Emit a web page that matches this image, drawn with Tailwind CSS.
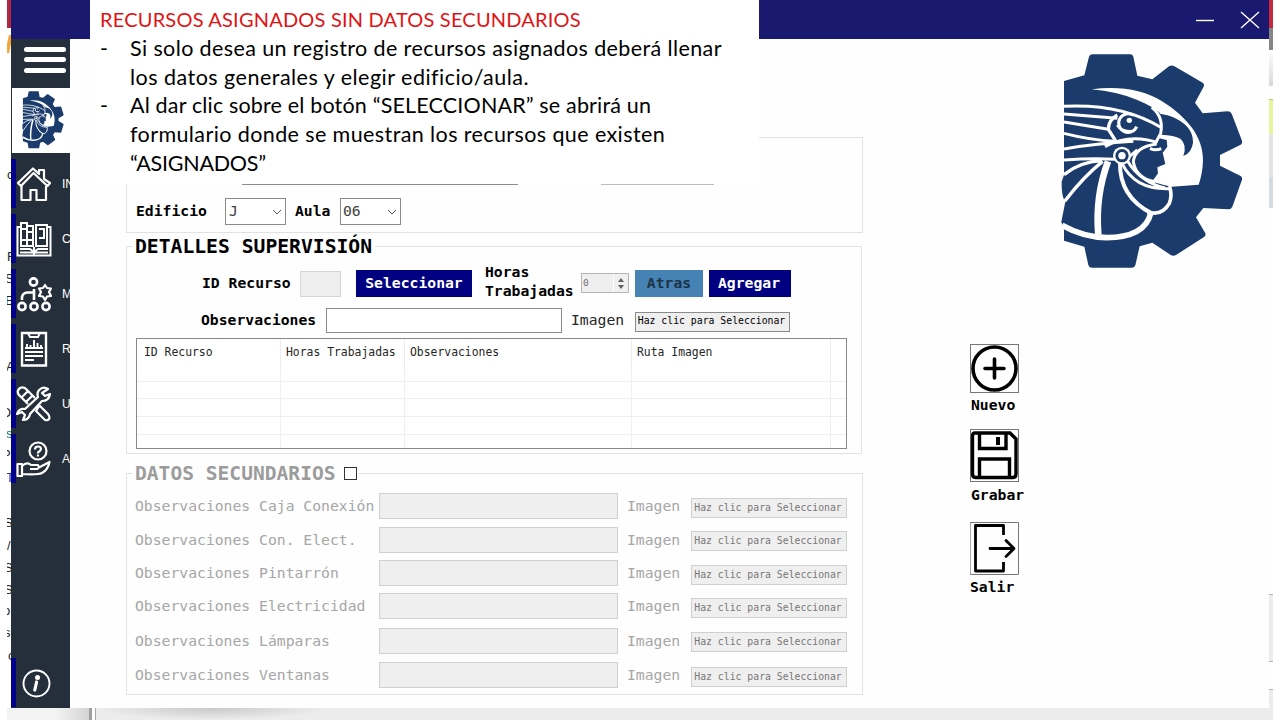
<!DOCTYPE html>
<html lang="es">
<head>
<meta charset="utf-8">
<title>Supervisión de recursos</title>
<script src="https://cdn.jsdelivr.net/npm/@tailwindcss/browser@4"></script>
</head>
<body class="bg-white">
<svg class="hidden">
  <symbol id="logo" viewBox="60 150 552 660" preserveAspectRatio="none">
    <path fill="#1b3b6c" d="M72,243L133,226L147,170Q150,163 158,163H270Q278,163 280,170L292,227L337,238L387,199Q394,194 402,198L488,248Q494,252 491,260L465,308L488,340L563,334Q571,334 575,341L606,422Q608,430 602,434L540,465V497L602,528Q608,532 606,539L577,620Q573,628 565,628L490,624L468,652L496,700Q498,707 492,711L408,765Q400,770 392,765L337,728L299,739L286,796Q284,803 276,803H155Q147,803 145,795L133,740L72,722V690L64,665L76,605Q64,590 65,545L72,525Z"/>
    <path fill="#fff" d="M155,268Q280,252 365,303C440,350 490,410 489,480Q488,520 476,554L395,560L372,555L336,545L354,520L352,502L376,492L368,458L382,440L380,420L358,415L368,385L360,340Q350,325 290,299Q230,275 155,268Z"/>
    <path fill="#1b3b6c" d="M360,341C420,350 462,385 459,428Q455,458 430,468Q442,436 422,417Q402,405 364,404Z"/>
    <g fill="none" stroke="#fff" stroke-width="9">
      <path d="M72,319C170,314 270,326 362,382M335,322Q372,350 362,400L345,432"/>
      <path d="M72,342L232,355M72,366L205,388M72,400Q150,420 225,424M72,447Q170,430 280,424M195,440Q270,400 352,428M72,480Q160,474 225,478" />
      <path d="M232,345Q205,360 205,388L228,424" stroke-width="10"/>
      <path d="M280,346A28,28 0 1 0 290,380M232,375Q245,397 275,394"/>
      <path d="M72,524Q120,485 185,482M188,484Q130,530 74,604" stroke-width="10"/>
      <path d="M204,484Q165,590 175,704" stroke-width="20"/>
      <path d="M240,488Q238,590 335,640" stroke-width="12"/>
      <path d="M262,482Q300,545 375,564M246,490Q285,570 388,566"/>
      <path d="M66,676Q130,712 200,713C270,712 320,690 332,640" stroke-width="17"/>
      <path d="M322,636Q365,650 388,610Q398,585 388,558" stroke-width="11"/>
      <path d="M350,432Q285,440 280,485Q288,535 345,545M268,470L292,450"/>
      <path d="M330,445Q345,453 364,446"/>
    </g>
    <circle cx="246" cy="467" r="27" fill="#fff"/><circle cx="246" cy="467" r="20" fill="#1b3b6c"/><circle cx="246" cy="467" r="11" fill="#fff"/>
    <circle cx="268" cy="361" r="8" fill="#fff"/>
  </symbol>
</svg>

<div class="relative w-[1280px] h-[720px] overflow-hidden bg-white font-['DejaVu_Sans_Mono',monospace] text-black">

  <!-- edges of the windows that lie behind -->
  <div class="absolute left-[7px] top-0 w-[4px] h-[708px] bg-white overflow-hidden font-['Liberation_Sans',sans-serif] text-[13px] leading-none text-neutral-800">
    <div class="h-[28px] bg-[#b0263c]"></div>
    <div class="absolute top-[35px] h-[18px] w-[4px] bg-[#f0a63c] -skew-x-12"></div>
    <div class="absolute top-[168px] left-0">c</div>
    <div class="absolute top-[250px] left-0">F</div>
    <div class="absolute top-[272px] -left-[2px]">S</div>
    <div class="absolute top-[294px] -left-[2px]">E</div>
    <div class="absolute top-[360px] -left-[1px]">A</div>
    <div class="absolute top-[406px] -left-[6px]">O</div>
    <div class="absolute top-[427px] -left-[1px] text-teal-700">s</div>
    <div class="absolute top-[448px] -left-[5px]">P</div>
    <div class="absolute top-[471px] -left-[1px] text-blue-800">T</div>
    <div class="absolute top-[516px] -left-[3px]">S</div>
    <div class="absolute top-[539px] left-0">/</div>
    <div class="absolute top-[561px] -left-[3px]">S</div>
    <div class="absolute top-[583px] -left-[3px]">S</div>
    <div class="absolute top-[604px] -left-[4px]">o</div>
    <div class="absolute top-[626px] -left-[3px]">s</div>
    <div class="absolute top-[649px] left-[1px]">c</div>
  </div>
  <div class="absolute left-[7px] top-[708px] w-[1266px] h-[12px] bg-[#ececec] flex">
    <div class="w-[82px] bg-gradient-to-r from-[#f3f3f3] from-60% to-[#d4d4d4]"></div>
    <div class="w-[3px] bg-[#a0a0a0]"></div>
    <div class="w-[3px] bg-white"></div>
    <div class="w-px bg-[#a8a8a8]"></div>
    <div class="w-[230px] bg-[radial-gradient(ellipse_at_top,#c8c8c8_0%,#ececec_70%)]"></div>
  </div>
  <div class="absolute left-[1269px] top-0 w-[4px] h-[708px] flex flex-col">
    <div class="h-[28px] bg-[#c8283c]"></div>
    <div class="h-[22px] bg-[#858585]"></div>
    <div class="h-[36px] bg-gradient-to-b from-white to-[#d8d8d8]"></div>
    <div class="h-[13px]"></div>
    <div class="h-[35px] bg-[#e6f49c] border-t border-[#b8c878]"></div>
    <div class="h-[43px] bg-[#e4e4e6]"></div>
    <div class="h-[31px] bg-[#d5dbe5]"></div>
    <div class="h-[386px]"></div>
    <div class="h-[68px] bg-[#ececec] border-y border-[#b4b4b4]"></div>
    <div class="h-[27px]"></div>
    <div class="h-[19px] bg-[#ececec] border-t border-[#b4b4b4]"></div>
  </div>

  <!-- application window -->
  <div class="ml-[11px] w-[1258px] h-[708px] flex flex-col bg-[#fefefe]">
    <header class="relative h-[39px] shrink-0 bg-[#191970] flex items-center justify-end gap-[26px] pr-[9px]">
      <svg width="18" height="18" stroke="#fff" stroke-width="1.4"><path d="M0,9.5H18"/></svg>
      <svg width="20" height="18" stroke="#fff" stroke-width="1.4"><path d="M1,1L19,17M19,1L1,17"/></svg>
    </header>
    <div class="flex flex-1">
      <nav class="w-[59px] h-[669px] bg-[#252f3b] flex flex-col overflow-hidden text-white font-['Liberation_Sans',sans-serif] text-[12px]">
        <div class="h-[49px] pl-[13px] pt-[8px] flex flex-col gap-[5.4px]">
          <div class="w-[42px] h-[5px] rounded-sm bg-white"></div>
          <div class="w-[42px] h-[5px] rounded-sm bg-white"></div>
          <div class="w-[42px] h-[5px] rounded-sm bg-white"></div>
        </div>
        <div class="ml-px h-[65px] bg-white pl-[10px] pt-[2px]"><svg class="w-[42px] h-[59px]"><use href="#logo"/></svg></div>
        <div class="mt-[6px] flex flex-col gap-[6px] whitespace-nowrap">
          <div class="h-[49px] border-l-[5px] border-[#00008b] flex items-center"><svg class="w-[36px] h-[36px] shrink-0 mr-[10px]" viewBox="0 0 36 36" fill="none" stroke="#fff" stroke-width="2.2" stroke-linejoin="round"><path d="M2,17L17,2.500L23,8V4H28V13L34,17L31.500,20L17.500,7L5,20Z"/><path d="M5.500,20V34H14.500V24H20.500V34H30V20"/></svg>IN</div>
          <div class="h-[49px] border-l-[5px] border-[#00008b] flex items-center"><svg class="w-[36px] h-[36px] shrink-0 mr-[10px]" viewBox="0 0 36 36" fill="none" stroke="#fff" stroke-width="2"><path d="M4,6H1.500V34.500H34.500V6H32M4,28H14L18,31L22,28H32M4,31.500H32M18,26V34"/><path d="M5,2H11V25H5ZM11,5H17V25H11ZM20,4H31V25H20ZM23,8H28V17H23M5,8H11M5,19H11M11,11H17M11,19H17"/></svg>C</div>
          <div class="h-[49px] border-l-[5px] border-[#00008b] flex items-center"><svg class="w-[36px] h-[36px] shrink-0 mr-[10px]" viewBox="0 0 36 36" fill="none" stroke="#fff" stroke-width="2.6"><circle cx="17.500" cy="6" r="3.600"/><circle cx="6" cy="30.500" r="3.600"/><circle cx="18" cy="30.500" r="3.600"/><circle cx="30" cy="30.500" r="3.600"/><path d="M6,24V21Q7,16.500 12,16.500H19M18,13V24"/><path stroke-width="2.200" stroke-linejoin="round" d="M29,9L31,12L35,12.500L33,16L35,20L31,20.500L29,24L27,20.500L23,20L25,16L23,12.500L27,12Z"/></svg>M</div>
          <div class="h-[49px] border-l-[5px] border-[#00008b] flex items-center"><svg class="w-[36px] h-[36px] shrink-0 mr-[10px]" viewBox="0 0 36 36" fill="none" stroke="#fff" stroke-width="1.900"><path stroke-width="2.400" d="M6,2H30V34.500H6Z"/><path d="M12,2L14,6H22L24,2M9,17H27M9,21H27M9,25H27M9,29H18M11,17V13M14.500,17V14M18,17V9M21.500,17V12M25,17V14"/></svg>R</div>
          <div class="h-[49px] border-l-[5px] border-[#00008b] flex items-center"><svg class="w-[36px] h-[36px] shrink-0 mr-[10px]" viewBox="0 0 36 36" fill="none" stroke="#fff" stroke-width="2.200" stroke-linejoin="round"><path d="M12,18L3,9Q0,5 4,2Q8,0 11,4L19,12M6,11L12,5M21,22L24,20L32,28Q35,32 32,34Q29,35 27,32L20,25L22,22M10,16L17,9"/><path d="M26,2Q20,5 22,11L9,23Q3,22 1,28L6,26L9,29L7,34Q13,34 14,28L26,15Q33,15 34,8L29,10L26,7L32,3Q29,1 26,2Z"/></svg>U</div>
          <div class="h-[49px] border-l-[5px] border-[#00008b] flex items-center"><svg class="w-[36px] h-[36px] shrink-0 mr-[10px]" viewBox="0 0 36 36" fill="none" stroke="#fff" stroke-width="2.200" stroke-linejoin="round"><circle cx="22" cy="10" r="8.500"/><path d="M19,8.500Q19,5.500 22,5.500Q25,5.500 25,8Q25,9.500 22,11.500V12.500M22,13.500V15.500"/><path d="M1.500,23H6V35H1.500ZM6,25Q11,20.500 15,24H22Q24,27 21,28H14M22,27L33.500,21Q32,29 26,32Q22,34 6,33"/></svg>A</div>
        </div>
        <div class="mt-auto mb-px h-[49px] border-l-[5px] border-[#00008b] pl-[6px] pt-[11px]"><svg class="w-[29px] h-[29px]" viewBox="0 0 29 29" fill="none" stroke="#fff"><circle cx="14.500" cy="14.500" r="13" stroke-width="1.900"/><path stroke-width="3.200" stroke-linecap="round" d="M14.600,13L12.800,21"/><circle cx="15.500" cy="8.500" r="2.500" fill="#fff" stroke="none"/></svg></div>
      </nav>

      <main class="flex flex-1">
        <form class="ml-[56px] mt-[97px] w-[737px] text-[14.73px]">
          <!-- general data -->
          <section class="mt-px h-[96px] border border-[#e2e2e2] flex flex-col">
            <div class="h-[47px] pl-[115px] flex gap-[83px]"><div class="w-[276px] border-b border-[#8a8a8a]"></div><div class="w-[113px] border-b border-[#bdbdbd]"></div></div>
            <div class="mt-[13px] ml-[9px] flex items-center h-[27px] font-bold">
              <span class="w-[89px]">Edificio</span>
              <div class="w-[61px] h-[27px] border border-[#8a8a8a] bg-white pl-[3px] pr-[3px] flex items-center justify-between font-normal text-neutral-700">J<svg width="10" height="6" fill="none" stroke="#555"><path d="M1,1L5,5L9,1"/></svg></div>
              <span class="ml-[9px] w-[45px]">Aula</span>
              <div class="w-[61px] h-[27px] border border-[#8a8a8a] bg-white pl-[2px] pr-[3px] flex items-center justify-between font-normal text-neutral-700">06<svg width="10" height="6" fill="none" stroke="#555"><path d="M1,1L5,5L9,1"/></svg></div>
            </div>
          </section>

          <!-- supervision details -->
          <section class="mt-[13px] w-[736px] h-[208px] border border-[#e2e2e2]">
            <h2 class="-mt-[12px] ml-[6px] pl-[2px] w-[242px] h-[24px] leading-[24px] bg-[#fefefe] font-bold text-[19.7px] whitespace-nowrap">DETALLES SUPERVISIÓN</h2>
            <div class="mt-[5px] h-[38px] flex items-center font-bold whitespace-nowrap">
              <span class="ml-[75px] w-[98px]">ID Recurso</span>
              <div class="w-[41px] h-[26px] mt-[2px] border border-[#d4d4d4] bg-[#efefef]"></div>
              <div class="ml-[15px] mt-px w-[116px] h-[27px] bg-[#000080] text-white flex items-center justify-center">Seleccionar</div>
              <div class="ml-[13px] w-[96px] leading-[18.500px] -mt-[3px]">Horas<br>Trabajadas</div>
              <div class="w-[48px] h-[20px] border border-[#b4b4b4] bg-[#efefef] pl-px flex justify-between font-normal text-[9.500px] text-neutral-500"><span class="leading-[17px]">0</span>
                <div class="w-[15px] flex flex-col items-center justify-center gap-[3px] border-l border-white"><svg width="6" height="4" fill="#606060"><path d="M0,4L3,0L6,4Z"/></svg><svg width="6" height="4" fill="#606060"><path d="M0,0L3,4L6,0Z"/></svg></div></div>
              <div class="ml-[6px] mt-px w-[68px] h-[27px] bg-[#4682b4] text-[#1c3448] flex items-center justify-center">Atras</div>
              <div class="ml-[6px] mt-px w-[82px] h-[27px] pr-[2px] bg-[#000080] text-white flex items-center justify-center">Agregar</div>
            </div>
            <div class="mt-[5px] h-[26px] flex items-center whitespace-nowrap">
              <span class="ml-[74px] w-[125px] font-bold">Observaciones</span>
              <div class="w-[236px] h-[25px] border border-[#8a8a8a] bg-white"></div>
              <span class="ml-[9px] w-[64px] text-neutral-800">Imagen</span>
              <div class="mt-[3px] w-[155px] h-[20px] pr-[2px] border border-[#8a8a8a] bg-[#efefef] flex items-center justify-center text-[9.8px]">Haz clic para Seleccionar</div>
            </div>
            <div class="mt-[5px] ml-[9px] w-[711px] h-[111px] border border-[#85888c] bg-white text-[11.400px] text-neutral-800">
              <div class="h-[25px] flex leading-[26px] whitespace-nowrap">
                <div class="w-[144px] pl-[7px] border-r border-[#ececec]">ID Recurso</div>
                <div class="w-[124px] pl-[5px] border-r border-[#ececec]">Horas Trabajadas</div>
                <div class="w-[227px] pl-[5px] border-r border-[#ececec]">Observaciones</div>
                <div class="w-[199px] pl-[5px] border-r border-[#ececec]">Ruta Imagen</div>
              </div>
              <div class="h-[84px] flex bg-[repeating-linear-gradient(to_bottom,transparent_0_16.700px,#efefef_16.700px_17.700px)]">
                <div class="w-[144px] border-r border-[#efefef]"></div><div class="w-[124px] border-r border-[#efefef]"></div><div class="w-[227px] border-r border-[#efefef]"></div><div class="w-[199px] border-r border-[#efefef]"></div>
              </div>
            </div>
          </section>

          <!-- secondary data -->
          <section class="mt-[19px] h-[222px] border border-[#e2e2e2] text-[#a6a6a6] whitespace-nowrap">
            <div class="-mt-[12px] ml-[6px] pl-[2px] w-[225px] h-[24px] bg-[#fefefe] flex items-center"><h2 class="w-[209px] font-bold text-[19.600px] text-[#9c9c9c]">DATOS SECUNDARIOS</h2><div class="-mt-px w-[13px] h-[13px] shrink-0 border border-[#333] bg-white"></div></div>
            <div class="mt-[7px] ml-[8px] grid grid-cols-[244px_248px_64px_156px] grid-rows-[34px_33px_33px_35px_34px_26px]">
              <span class="leading-[26px]">Observaciones Caja Conexión</span><div class="w-[239px] h-[26px] border border-[#cfcfcf] bg-[#efefef]"></div><span class="leading-[26px]">Imagen</span><div class="mt-[5px] h-[20px] pr-[2px] border border-[#cfcfcf] bg-[#efefef] text-[#777] text-[9.8px] flex items-center justify-center">Haz clic para Seleccionar</div>
              <span class="leading-[26px]">Observaciones Con. Elect.</span><div class="w-[239px] h-[26px] border border-[#cfcfcf] bg-[#efefef]"></div><span class="leading-[26px]">Imagen</span><div class="mt-[4px] h-[20px] pr-[2px] border border-[#cfcfcf] bg-[#efefef] text-[#777] text-[9.8px] flex items-center justify-center">Haz clic para Seleccionar</div>
              <span class="leading-[26px]">Observaciones Pintarrón</span><div class="w-[239px] h-[26px] border border-[#cfcfcf] bg-[#efefef]"></div><span class="leading-[26px]">Imagen</span><div class="mt-[5px] h-[20px] pr-[2px] border border-[#cfcfcf] bg-[#efefef] text-[#777] text-[9.8px] flex items-center justify-center">Haz clic para Seleccionar</div>
              <span class="leading-[26px]">Observaciones Electricidad</span><div class="w-[239px] h-[26px] border border-[#cfcfcf] bg-[#efefef]"></div><span class="leading-[26px]">Imagen</span><div class="mt-[5px] h-[20px] pr-[2px] border border-[#cfcfcf] bg-[#efefef] text-[#777] text-[9.8px] flex items-center justify-center">Haz clic para Seleccionar</div>
              <span class="leading-[26px]">Observaciones Lámparas</span><div class="w-[239px] h-[26px] border border-[#cfcfcf] bg-[#efefef]"></div><span class="leading-[26px]">Imagen</span><div class="mt-[4px] h-[20px] pr-[2px] border border-[#cfcfcf] bg-[#efefef] text-[#777] text-[9.8px] flex items-center justify-center">Haz clic para Seleccionar</div>
              <span class="leading-[26px]">Observaciones Ventanas</span><div class="w-[239px] h-[26px] border border-[#cfcfcf] bg-[#efefef]"></div><span class="leading-[26px]">Imagen</span><div class="mt-[5px] h-[20px] pr-[2px] border border-[#cfcfcf] bg-[#efefef] text-[#777] text-[9.8px] flex items-center justify-center">Haz clic para Seleccionar</div>
            </div>
          </section>
        </form>

        <aside class="ml-[107px] w-[299px] flex flex-col font-bold text-[14.730px] leading-[18px]">
          <svg class="ml-[90px] mt-[11px] w-[184px] h-[220px] shrink-0"><use href="#logo"/></svg>
          <div class="mt-[74px] h-[86px]">
            <svg class="block" width="49" height="49" fill="none" stroke="#000"><rect x=".5" y=".5" width="48" height="48" stroke="#777"/><circle cx="24.500" cy="24.500" r="21.500" stroke-width="3.600"/><path stroke-width="3.600" stroke-linecap="round" d="M15,24.500H34M24.500,15V34"/></svg>
            <div class="mt-[3px] ml-px">Nuevo</div>
          </div>
          <div class="-mt-px h-[93px]">
            <svg class="block" width="49" height="53" fill="none" stroke="#000"><rect x=".5" y=".5" width="48" height="52" stroke="#777"/><path stroke-width="3.400" d="M5,4H40L46,10V45Q46,48.500 43,48.500H5.500Q2.500,48.500 2.500,45V7Q2.500,4 5,4ZM9.500,4V19.500H36V4M9.500,48.500V30H39.500V48.500"/><path stroke-width="4" d="M28,8V16"/></svg>
            <div class="mt-[4px] ml-px">Grabar</div>
          </div>
          <div>
            <svg class="block" width="49" height="53" fill="none" stroke="#000" stroke-width="2.800" stroke-linecap="round" stroke-linejoin="round"><rect x=".5" y=".5" width="48" height="52" stroke="#777" stroke-width="1"/><path stroke-linecap="butt" d="M33.500,13V3.500H5.500V49H33.500V40"/><path d="M20,26.500H43M36,18.500L44,26.500L36,34.500"/></svg>
            <div class="mt-[3px]">Salir</div>
          </div>
        </aside>
      </main>
    </div>
  </div>

  <!-- instruction note laid over the window -->
  <div class="absolute left-[90px] top-0 w-[669px] h-[184px] bg-white pl-[10px] pt-[5px] font-['Lato',sans-serif] text-[21.5px] leading-[28.800px] whitespace-nowrap">
    <p class="text-[20px] text-[#e01414] tracking-[0.2px]">RECURSOS ASIGNADOS SIN DATOS SECUNDARIOS</p>
    <div class="flex"><span class="w-[30px] shrink-0">-</span><div><p class="tracking-[0.39px]">Si solo desea un registro de recursos asignados deberá llenar</p><p class="tracking-[0.48px]">los datos generales y elegir edificio/aula.</p></div></div>
    <div class="flex"><span class="w-[30px] shrink-0">-</span><div><p class="tracking-[0.17px]">Al dar clic sobre el botón “SELECCIONAR” se abrirá un</p><p class="tracking-[0.4px]">formulario donde se muestran los recursos que existen</p><p class="tracking-[-0.25px]">“ASIGNADOS”</p></div></div>
  </div>
</div>
</body>
</html>
